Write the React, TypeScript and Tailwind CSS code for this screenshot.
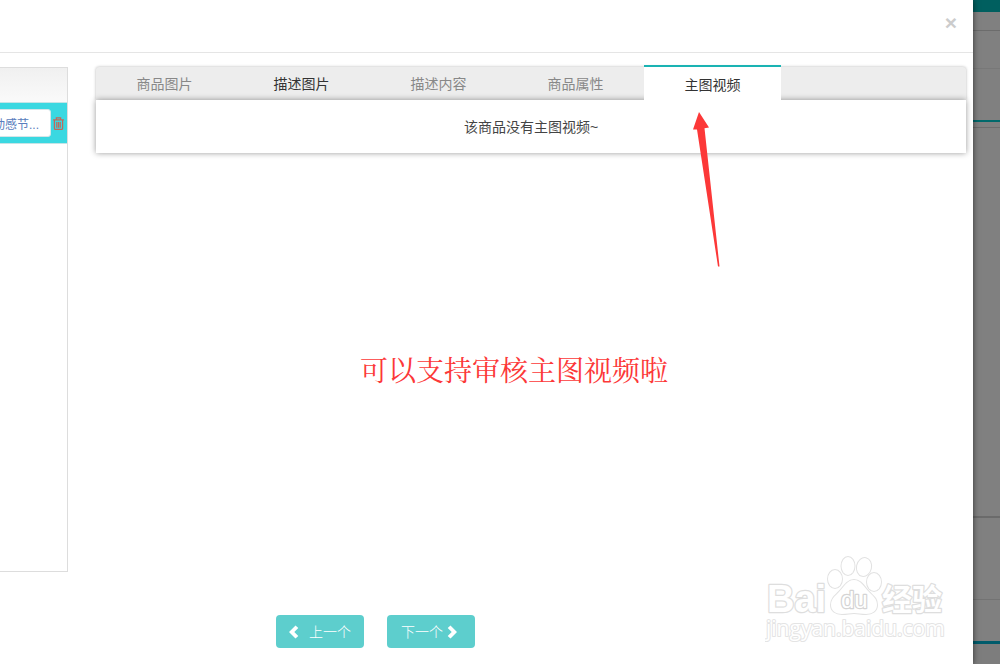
import { useState } from 'react';

interface TabItem {
  id: string;
  label: string;
  visited?: boolean;
}

const tabs: TabItem[] = [
  { id: 'images', label: '商品图片' },
  { id: 'descImages', label: '描述图片', visited: true },
  { id: 'descContent', label: '描述内容' },
  { id: 'attributes', label: '商品属性' },
  { id: 'video', label: '主图视频' },
];

function TrashIcon() {
  return (
    <svg width="11" height="13" viewBox="0 0 10 12" fill="none" stroke="#c4685a" strokeWidth="1.1" aria-hidden="true">
      <path d="M0 2.7h10M3 2.5V.8h4v1.700M1.200 3v7.400c0 .7.4 1.100 1.100 1.100h5.400c.7 0 1.100-.4 1.100-1.100V3M3.400 4.500V10M5 4.500V10M6.600 4.500V10" />
    </svg>
  );
}

function Chevron({ dir }: { dir: 'left' | 'right' }) {
  return (
    <svg width="10" height="14" viewBox="0 0 10 14" fill="white" aria-hidden="true">
      {dir === 'left' ? (
        <path d="M0 7 6.500.5 9.300 3.100 5.300 7l4 3.900-2.800 2.600z" />
      ) : (
        <path d="M10 7 3.500.5.7 3.100l4 3.900-4 3.900 2.800 2.600z" />
      )}
    </svg>
  );
}

// Красная стрелка к вкладке с видео
function Arrow() {
  return (
    <svg className="pointer-events-none absolute left-[690px] top-[110px] z-20" width="32" height="160" viewBox="0 0 32 160" aria-hidden="true">
      <path d="M9 2 19 17.500l-4.500.7L29.500 156.500h-1.500L7 19.500H3z" fill="#fc3838" />
    </svg>
  );
}

// Водяной знак
function Watermark() {
  return (
    <svg
      className="pointer-events-none absolute right-[24px] top-[552px]"
      width="184"
      height="92"
      viewBox="0 0 184 92"
      fill="white"
      stroke="#dedede"
      strokeWidth="2.500"
      strokeLinejoin="round"
      paintOrder="stroke"
      fontFamily="'Liberation Sans', 'Noto Sans CJK SC', sans-serif"
      fontWeight="bold"
    >
      <text x="2" y="60" fontSize="38">Bai</text>
      <g strokeWidth="2" stroke="#e2e2e2">
        <ellipse cx="70" cy="27" rx="7" ry="9" />
        <ellipse cx="83" cy="14" rx="6.500" ry="9" />
        <ellipse cx="99" cy="15" rx="7" ry="9" transform="rotate(12 99 15)" />
        <ellipse cx="109" cy="30" rx="7" ry="9" />
        <path d="M89 28c7 0 10 7 15 12s8 7 8 13-5 9-11 9c-5 0-8-1-12-1s-7 1-12 1c-6 0-11-3-11-9s4-9 8-13 8-12 15-12z" />
      </g>
      <text x="76" y="56" fontSize="24" fontWeight="normal" stroke="#d4d4d4">du</text>
      <text x="117" y="58" fontSize="30">经验</text>
      <text x="1" y="84" fontSize="21" fontWeight="normal" strokeWidth="2" stroke="#e4e4e4" fontFamily="'Open Sans', sans-serif">jingyan.baidu.com</text>
    </svg>
  );
}

// Затемнённая страница за модальным окном
function Backdrop() {
  return (
    <div className="flex w-[27px] shrink-0 flex-col bg-[#808080]" aria-hidden="true">
      <div className="h-3 bg-[#005f5f]" />
      <div className="h-[19px] border-b border-[#6c6c6c]" />
      <div className="h-[38px] border-b border-[#787878]" />
      <div className="h-[51px]" />
      <div className="h-[2px] bg-[#00696b]" />
      <div className="h-[6px] border-b border-[#6c6c6c]" />
      <div className="h-[390px] border-b-2 border-[#6b6b6b]" />
      <div className="h-[82px] border-b border-[#737373]" />
      <div className="h-[41px]" />
      <div className="h-[3px] bg-[#005b6b]" />
      <div className="grow bg-[#7d7d7d]" />
    </div>
  );
}

export default function App() {
  const [activeTab, setActiveTab] = useState('video');
  const [keyword, setKeyword] = useState('动感节...');

  return (
    <div className="flex min-h-screen overflow-hidden bg-[#808080] font-['Liberation_Sans','Noto_Sans_CJK_SC',sans-serif]">
      <main className="relative z-10 min-w-0 grow bg-white shadow-[0_0_6px_rgba(0,0,0,0.6)]">
        <header className="flex h-[53px] items-start justify-end border-b border-[#e5e5e5] px-4 pt-3">
          <button type="button" aria-label="关闭" className="text-[21px] leading-[21px] font-bold text-[#cccccc]">
            ×
          </button>
        </header>

        <div className="flex pt-[14px] pr-[7px]">
          {/* Список товаров */}
          <aside className="h-[505px] w-[68px] shrink-0 overflow-hidden border-y border-r border-[#dddddd]">
            <div className="h-[34px] bg-linear-to-b from-[#f0f0f0] to-[#fafafa]" />
            <div className="flex h-[42px] items-center border-y border-[#c4e4e6] bg-[#3ad8e1]">
              <input
                type="text"
                aria-label="商品名称"
                value={keyword}
                onChange={e => setKeyword(e.target.value)}
                className="-ml-3 h-7 w-[63px] shrink-0 rounded-[3px] border border-[#d5e5e8] bg-white pl-1 text-xs text-[#5a7dbd]"
              />
              <button type="button" aria-label="删除" className="ml-[2px]">
                <TrashIcon />
              </button>
            </div>
          </aside>

          {/* Вкладки карточки товара */}
          <section className="ml-7 min-w-0 grow text-sm">
            <div role="tablist" className="flex h-[33px] items-end rounded-t-[3px] bg-[#ededed] shadow-[0_0_3px_rgba(0,0,0,0.3)]">
              {tabs.map(tab => (
                <button
                  key={tab.id}
                  type="button"
                  role="tab"
                  aria-selected={activeTab === tab.id}
                  onClick={() => setActiveTab(tab.id)}
                  className={
                    activeTab === tab.id
                      ? 'relative z-10 h-[35px] w-[137px] border-t-2 border-[#1ab3b3] bg-white pt-[3px] text-[#333333]'
                      : `h-[33px] w-[137px] ${tab.visited ? 'text-[#333333]' : 'text-[#888888]'}`
                  }
                >
                  {tab.label}
                </button>
              ))}
            </div>
            <div role="tabpanel" className="flex h-[53px] items-center justify-center bg-white text-[#444444] shadow-[0_0_6px_rgba(0,0,0,0.4)]">
              该商品没有主图视频~
            </div>
            <p className="mt-[196px] pl-[264px] font-['Noto_Serif_CJK_SC','Noto_Sans_CJK_SC',serif] text-[28px] leading-10 text-[#fc3838]">
              可以支持审核主图视频啦
            </p>
          </section>
        </div>

        <footer className="flex gap-[23px] pt-[43px] pb-4 pl-[276px] text-sm font-light text-white">
          <button type="button" className="flex h-[33px] w-[88px] items-center justify-center gap-[10px] rounded-[4px] bg-[#5dcecd]">
            <Chevron dir="left" />
            上一个
          </button>
          <button type="button" className="flex h-[33px] w-[88px] items-center justify-center gap-1 rounded-[4px] bg-[#5dcecd] pr-1">
            下一个
            <Chevron dir="right" />
          </button>
        </footer>

        <Arrow />
        <Watermark />
      </main>
      <Backdrop />
    </div>
  );
}
